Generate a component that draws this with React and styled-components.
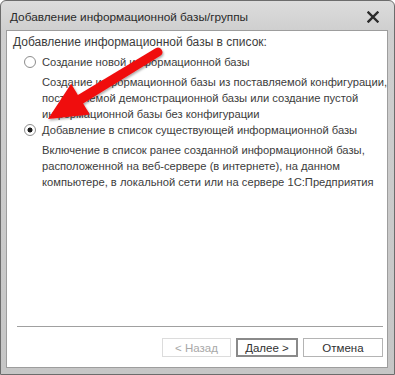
import styled, { createGlobalStyle } from "styled-components";

const GlobalStyle = createGlobalStyle`
     html, body {
          margin: 0;
          padding: 0;
          background: #ffffff;
     }
     body {
          font-family: "Liberation Sans", Arial, sans-serif;
     }
`;

const options = [
     {
          label: "Создание новой информационной базы",
          lines: [
               "Создание информационной базы из поставляемой конфигурации,",
               "поставляемой демонстрационной базы или создание пустой",
               "информационной базы без конфигурации",
          ],
          checked: false,
     },
     {
          label: "Добавление в список существующей информационной базы",
          lines: [
               "Включение в список ранее созданной информационной базы,",
               "расположенной на веб-сервере (в интернете), на данном",
               "компьютере,  в локальной сети или на сервере 1С:Предприятия",
          ],
          checked: true,
     },
];

const App = () => {
     return (
          <>
               <GlobalStyle />
               <Window>
                    <TitleBar>
                         <Title>Добавление информационной базы/группы</Title>
                         <CloseButton>
                              <svg width="12" height="12" viewBox="0 0 12 12">
                                   <path d="M1.5 1.5 L10.5 10.5 M10.5 1.5 L1.5 10.5" stroke="#2b2b2b" strokeWidth="2.4" strokeLinecap="square" />
                              </svg>
                         </CloseButton>
                    </TitleBar>
                    <Body>
                         <Heading>Добавление информационной базы в список:</Heading>
                         {options.map((o) => (
                              <Option key={o.label}>
                                   <OptionRow>
                                        <Radio $checked={o.checked} />
                                        <Label>{o.label}</Label>
                                   </OptionRow>
                                   <Description>
                                        {o.lines.map((l) => (
                                             <div key={l}>{l}</div>
                                        ))}
                                   </Description>
                              </Option>
                         ))}
                         <Spacer />
                         <Separator />
                         <ButtonRow>
                              <Button $disabled>&lt; Назад</Button>
                              <Button $default>Далее &gt;</Button>
                              <Button $wide>Отмена</Button>
                         </ButtonRow>
                    </Body>
                    <Arrow width="395" height="375" viewBox="0 0 395 375">
                         <defs>
                              <filter id="sh" x="-20%" y="-20%" width="140%" height="140%">
                                   <feDropShadow dx="1" dy="1.5" stdDeviation="1.2" floodColor="#000" floodOpacity="0.35" />
                              </filter>
                         </defs>
                         <path
                              d="M155.6 48.2 L77.9 94.9 L71.1 83.8 L48 119 L89.9 114.6 L83.1 103.5 L160.4 55.8 A4.5 4.5 0 0 0 155.6 48.2 Z"
                              fill="#f01010"
                              filter="url(#sh)"
                         />
                    </Arrow>
               </Window>
          </>
     );
};

export default App;

const Window = styled.div`
     position: relative;
     width: 395px;
     height: 375px;
     box-sizing: border-box;
     display: flex;
     flex-direction: column;
     border: 1px solid #6c6c6c;
     border-radius: 6px 6px 0 0;
     background: linear-gradient(#dcdcdc, #cfcfcf 30px, #c6c6c6);
     padding: 0 6px 6px 5px;
     overflow: hidden;
`;

const TitleBar = styled.div`
     height: 29px;
     display: flex;
     align-items: center;
     justify-content: space-between;
     padding: 0 4px 0 4px;
`;

const Title = styled.div`
     font-family: "Segoe UI", "Liberation Sans", Arial, sans-serif;
     font-size: 11.8px;
     color: #2a2a2a;
     padding-top: 2px;
`;

const CloseButton = styled.div`
     width: 16px;
     height: 16px;
     display: flex;
     align-items: center;
     justify-content: center;
     margin-right: 3px;
     margin-top: 2px;
`;

const Body = styled.div`
     flex: 1;
     display: flex;
     flex-direction: column;
     background: #ffffff;
     border: 1px solid #9d9d9d;
     padding: 3px 4px 6px 6px;
     font-size: 11.2px;
     color: #3c3c3c;
     white-space: nowrap;
`;

const Heading = styled.div`
     line-height: 16px;
     margin-bottom: 4px;
     font-size: 12px;
`;

const Option = styled.div`
     display: flex;
     flex-direction: column;
`;

const OptionRow = styled.div`
     display: flex;
     align-items: center;
     gap: 6px;
     padding-left: 11px;
     height: 16px;
`;

const Radio = styled.span`
     width: 12px;
     height: 12px;
     border-radius: 50%;
     border: 1px solid #8e8e8e;
     background: radial-gradient(circle, ${(p) => (p.$checked ? "#1d1d1d 0 2.2px, #ffffff 2.8px" : "#ffffff 0 60%, #ececec 100%")});
     box-sizing: border-box;
     flex-shrink: 0;
`;

const Label = styled.span`
     line-height: 16px;
`;

const Description = styled.div`
     padding: 4px 0 0 29px;
     line-height: 16px;
`;

const Spacer = styled.div`
     flex: 1;
`;

const Separator = styled.div`
     height: 1px;
     background: #a0a0a0;
     margin: 0 0 11px 4px;
`;

const Button = styled.div`
     box-sizing: border-box;
     height: 19px;
     width: ${(p) => (p.$wide ? "80px" : p.$default ? "62px" : "69px")};
     display: flex;
     align-items: center;
     justify-content: center;
     background: #ffffff;
     border: ${(p) => (p.$default ? "2px solid #8a8a8a" : p.$disabled ? "1px solid #dcdcdc" : "1px solid #b4b4b4")};
     color: ${(p) => (p.$disabled ? "#a8a8a8" : "#303030")};
     font-size: 11.5px;
`;

const ButtonRow = styled.div`
     display: flex;
     justify-content: flex-end;
     gap: 5px;
     margin-bottom: 4px;
`;

const Arrow = styled.svg`
     position: absolute;
     left: -1px;
     top: -1px;
     pointer-events: none;
`;
